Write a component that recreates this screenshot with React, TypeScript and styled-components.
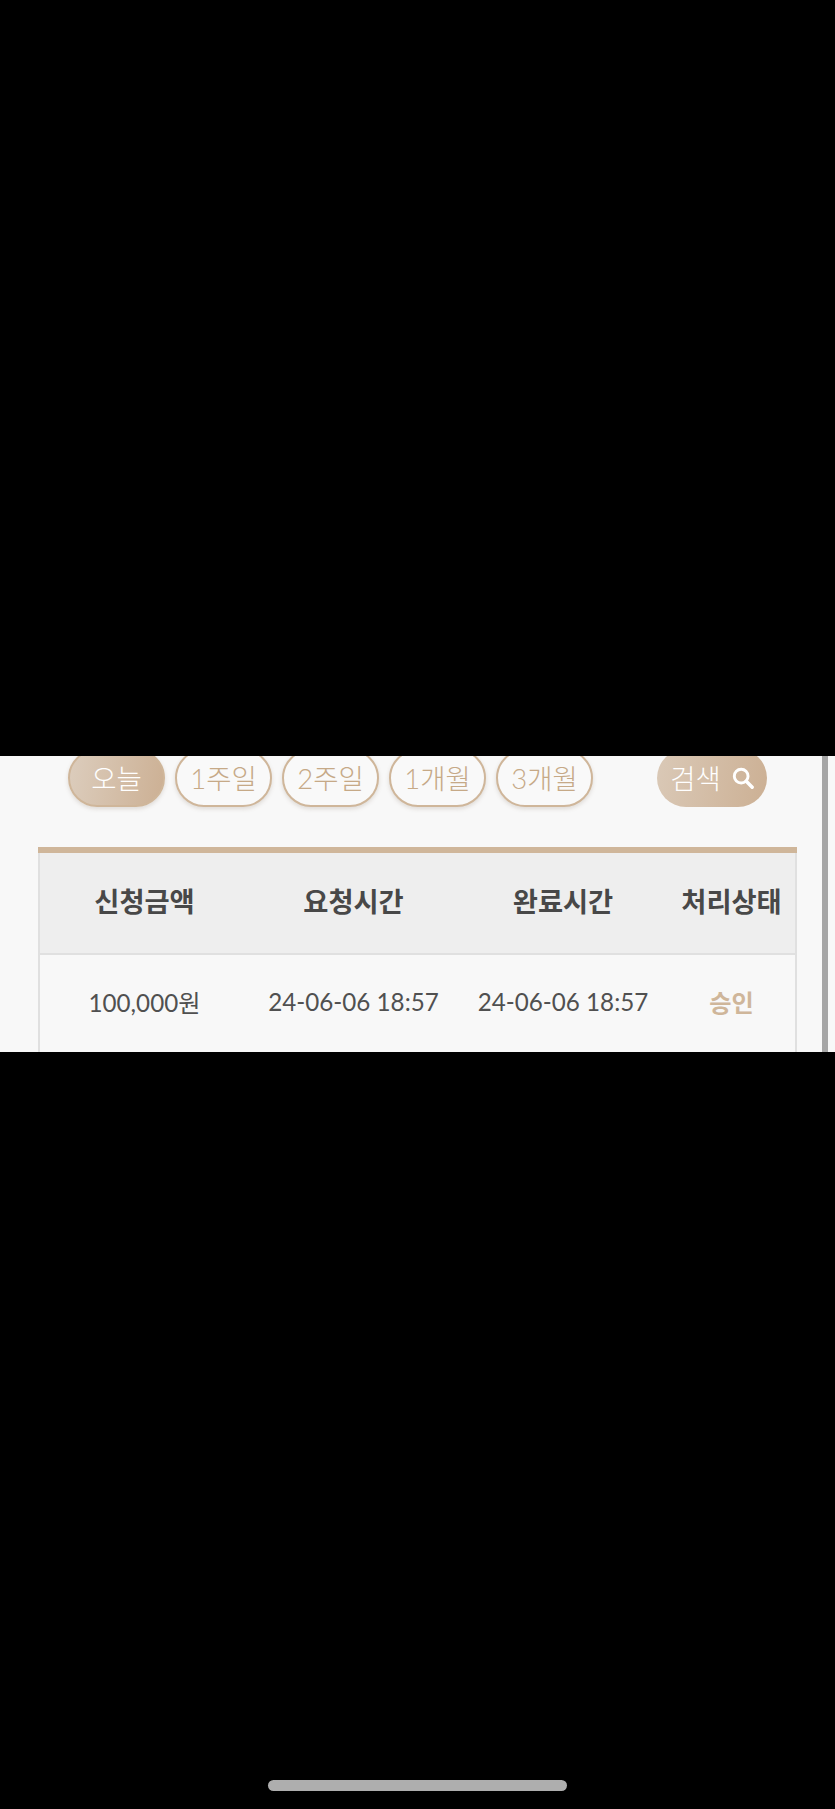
import React from 'react';
import styled, { createGlobalStyle } from 'styled-components';

const GOLD = '#cfb69a';

const GlobalStyle = createGlobalStyle`
  html, body {
    margin: 0;
    padding: 0;
    background: #000;
  }
  body {
    font-family: Lato, "Noto Sans CJK KR", sans-serif;
  }
`;

const Screen = styled.div`
  width: 835px;
  height: 1809px;
  background: #000;
  display: flex;
  flex-direction: column;
  overflow: hidden;
  padding-top: 756px;
  box-sizing: border-box;
`;

const Panel = styled.div`
  height: 296px;
  background: #f8f8f8;
  display: flex;
  overflow: hidden;
  flex-shrink: 0;
`;

const Content = styled.div`
  width: 822px;
  flex-shrink: 0;
`;

const ScrollThumb = styled.div`
  width: 6px;
  background: #a6a6a6;
  flex-shrink: 0;
`;

const FilterRow = styled.div`
  display: flex;
  margin: -7px 0 0 68px;
  width: 699px;
  height: 58px;
`;

const RangeButton = styled.button<{ $active?: boolean }>`
  width: 97px;
  height: 58px;
  margin-right: 10px;
  box-sizing: border-box;
  padding: 0 0 3px;
  border-radius: 29px;
  border: 2px solid ${GOLD};
  background: ${(p) => (p.$active ? 'linear-gradient(100deg, #dccdbd 0%, #ccb094 100%)' : '#f9f9f9')};
  color: ${(p) => (p.$active ? '#fff' : '#c6a987')};
  box-shadow: 0 2px 4px rgba(120, 100, 80, 0.2);
  font: 300 27.5px Lato, "Noto Sans CJK KR", sans-serif;
  flex-shrink: 0;
`;

const SearchButton = styled.button`
  width: 110px;
  height: 58px;
  margin-left: auto;
  box-sizing: border-box;
  padding: 0 0 3px;
  border: 0;
  border-radius: 29px;
  background: linear-gradient(100deg, #dac9b7 0%, #ccb094 100%);
  color: #fff;
  font: 300 27.5px Lato, "Noto Sans CJK KR", sans-serif;
  display: flex;
  align-items: center;
  justify-content: center;
  gap: 11px;
  flex-shrink: 0;
`;

const SearchIcon = styled.svg`
  width: 22px;
  height: 22px;
  margin-top: 3px;
  fill: none;
  stroke: #fff;
  stroke-width: 3.2;
  stroke-linecap: round;
`;

const Table = styled.table`
  margin: 40px 0 0 38px;
  width: 757px;
  border-collapse: collapse;
  table-layout: fixed;
  border-top: 6px solid ${GOLD};
`;

const HeadCell = styled.th`
  height: 104px;
  padding: 0 0 6px;
  box-sizing: border-box;
  background: #eeeeee;
  color: #484848;
  font-size: 27.3px;
  font-weight: 700;
  text-align: center;
  border-bottom: 2px solid #e0e0e0;

  &:first-child {
    border-left: 2px solid #e0e0e0;
  }
  &:last-child {
    border-right: 2px solid #e0e0e0;
  }
`;

const Cell = styled.td<{ $status?: boolean }>`
  height: 102px;
  padding: 0 0 8px;
  box-sizing: border-box;
  text-align: center;
  color: ${(p) => (p.$status ? GOLD : '#505050')};
  font-size: 24.2px;
  font-weight: ${(p) => (p.$status ? 700 : 400)};

  &:first-child {
    border-left: 2px solid #e0e0e0;
  }
  &:last-child {
    border-right: 2px solid #e0e0e0;
  }
`;

const HomeBar = styled.div`
  width: 299px;
  height: 11px;
  margin: 728px auto 0;
  border-radius: 6px;
  background: #aeaeae;
  flex-shrink: 0;
`;

const ranges = ['오늘', '1주일', '2주일', '1개월', '3개월'];
const heads = ['신청금액', '요청시간', '완료시간', '처리상태'];

const App: React.FC = () => (
  <>
    <GlobalStyle />
    <Screen>
      <Panel>
        <Content>
          <FilterRow>
            {ranges.map((r, i) => (
              <RangeButton key={r} $active={i === 0}>
                {r}
              </RangeButton>
            ))}
            <SearchButton>
              검색
              <SearchIcon viewBox="0 0 24 24">
                <circle cx="10" cy="10" r="7.5" />
                <path d="M15.6 15.6 22 22" strokeWidth="3.8" />
              </SearchIcon>
            </SearchButton>
          </FilterRow>
          <Table>
            <colgroup>
              <col style={{ width: 210 }} />
              <col style={{ width: 209 }} />
              <col style={{ width: 210 }} />
              <col style={{ width: 128 }} />
            </colgroup>
            <thead>
              <tr>
                {heads.map((h) => (
                  <HeadCell key={h}>{h}</HeadCell>
                ))}
              </tr>
            </thead>
            <tbody>
              <tr>
                <Cell>100,000원</Cell>
                <Cell>24-06-06 18:57</Cell>
                <Cell>24-06-06 18:57</Cell>
                <Cell $status>승인</Cell>
              </tr>
            </tbody>
          </Table>
        </Content>
        <ScrollThumb />
      </Panel>
      <HomeBar />
    </Screen>
  </>
);

export default App;
